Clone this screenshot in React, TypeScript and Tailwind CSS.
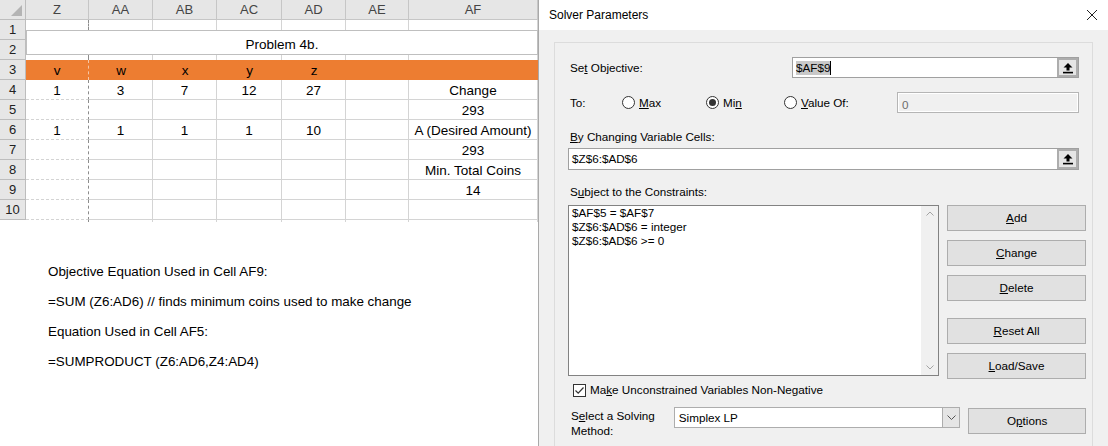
import type { ReactNode } from "react";

const cols = [
  { name: "Z", w: 63 },
  { name: "AA", w: 64 },
  { name: "AB", w: 64 },
  { name: "AC", w: 65 },
  { name: "AD", w: 64 },
  { name: "AE", w: 63 },
  { name: "AF", w: 129 },
];

const rows: { n: number; cells: string[] }[] = [
  { n: 4, cells: ["1", "3", "7", "12", "27", "", "Change"] },
  { n: 5, cells: ["", "", "", "", "", "", "293"] },
  { n: 6, cells: ["1", "1", "1", "1", "10", "", "A (Desired Amount)"] },
  { n: 7, cells: ["", "", "", "", "", "", "293"] },
  { n: 8, cells: ["", "", "", "", "", "", "Min. Total Coins"] },
  { n: 9, cells: ["", "", "", "", "", "", "14"] },
  { n: 10, cells: ["", "", "", "", "", "", ""] },
];

const sheetFont = { fontFamily: '"Liberation Sans", Arial, sans-serif' };
const dlgFont = { fontFamily: '"Liberation Sans", Arial, sans-serif' };

const lineFor = (i: number) =>
  i === 0 ? "border-r border-dashed border-r-[#8c8c8c]" : "border-r border-r-[#d4d4d4]";

function RowHead({ children, h = "h-[20px]" }: { children?: ReactNode; h?: string }) {
  return (
    <div
      className={`${h} w-[26px] shrink-0 flex items-center justify-center border-r border-b border-[#bdbdbd] bg-[#e6e6e6] text-[13px] text-[#222]`}
    >
      {children}
    </div>
  );
}

function Strip({ h, bottom }: { h: string; bottom?: boolean }) {
  return (
    <div className={`flex ${h}`}>
      {cols.map((c, i) => (
        <div
          key={c.name}
          className={`${lineFor(i)} ${bottom ? "border-b border-b-[#d4d4d4]" : ""}`}
          style={{ width: c.w }}
        />
      ))}
    </div>
  );
}

function Sheet() {
  return (
    <div className="w-[538px] shrink-0 bg-white text-black" style={sheetFont}>
      {/* column headers */}
      <div className="flex h-[20px]">
        <div className="relative w-[26px] border-r border-b border-[#bdbdbd] bg-[#e6e6e6]">
          <svg className="absolute right-[3px] bottom-[3px]" width="11" height="11" viewBox="0 0 11 11">
            <path d="M11 0 V11 H0 Z" fill="#b4b4b4" />
          </svg>
        </div>
        {cols.map((c) => (
          <div
            key={c.name}
            className="flex items-center justify-center border-r border-b border-[#c6c6c6] bg-[#e6e6e6] text-[13px] text-[#444]"
            style={{ width: c.w }}
          >
            {c.name}
          </div>
        ))}
      </div>

      {/* rows 1-2 with merged title */}
      <div className="flex">
        <div className="flex flex-col">
          <RowHead>1</RowHead>
          <RowHead>2</RowHead>
        </div>
        <div className="flex flex-col">
          <Strip h="h-[10px]" />
          <div className="flex h-[25px] items-center justify-center border border-[#bfbfbf] bg-white pt-[5px] text-[13.5px]">
            Problem 4b.
          </div>
          <Strip h="h-[5px]" />
        </div>
      </div>

      {/* row 3 orange */}
      <div className="flex h-[20px]">
        <RowHead>3</RowHead>
        {cols.map((c, i) => (
          <div
            key={c.name}
            className={`flex items-center justify-center bg-[#ed7d31] pt-[2px] text-[13.5px] ${
              i === 0 ? "border-r border-dashed border-r-[#f6c7a6]" : ""
            }`}
            style={{ width: c.w }}
          >
            {["v", "w", "x", "y", "z", "", ""][i]}
          </div>
        ))}
      </div>

      {rows.map((r) => (
        <div key={r.n} className="flex h-[20px]">
          <RowHead>{r.n}</RowHead>
          {cols.map((c, i) => (
            <div
              key={c.name}
              className={`flex items-center justify-center whitespace-nowrap border-b border-b-[#d4d4d4] pt-[3px] text-[13.5px] ${lineFor(i)}`}
              style={{ width: c.w }}
            >
              {r.cells[i]}
            </div>
          ))}
        </div>
      ))}
      <div className="flex h-[2px]">
        <div className="w-[26px]" />
        <Strip h="h-[2px]" />
      </div>

      <div className="pl-[48px] pt-[35px] text-[13.4px]">
        <p className="h-[30px] leading-[30px]">Objective Equation Used in Cell AF9:</p>
        <p className="h-[30px] leading-[30px]">=SUM (Z6:AD6) // finds minimum coins used to make change</p>
        <p className="h-[30px] leading-[30px]">Equation Used in Cell AF5:</p>
        <p className="h-[30px] leading-[30px]">=SUMPRODUCT (Z6:AD6,Z4:AD4)</p>
      </div>
    </div>
  );
}

function RefButton() {
  return (
    <div className="flex h-full w-[21px] shrink-0 items-center justify-center border-2 border-[#adadad] bg-[#e5e5e5]">
      <svg width="12" height="12" viewBox="0 0 12 12">
        <path d="M6 1 L1.5 5.5 H4.5 V8.5 H7.5 V5.5 H10.5 Z" fill="#000" />
        <rect x="1" y="9.8" width="10" height="1.6" fill="#000" />
      </svg>
    </div>
  );
}

function Radio({ on, children, w }: { on?: boolean; children: ReactNode; w: string }) {
  return (
    <div className={`flex items-center ${w}`}>
      <span className="flex h-[13px] w-[13px] items-center justify-center rounded-full border border-[#333] bg-white">
        {on ? <span className="h-[7px] w-[7px] rounded-full bg-[#333]" /> : null}
      </span>
      <span className="ml-[4px]">{children}</span>
    </div>
  );
}

function Btn({ children, className = "" }: { children: ReactNode; className?: string }) {
  return (
    <div
      className={`flex h-[26px] items-center justify-center border border-[#adadad] bg-[#e1e1e1] ${className}`}
    >
      {children}
    </div>
  );
}

function Dialog() {
  return (
    <div className="relative h-[446px] flex-1 overflow-hidden border-l border-[#a9a9a9] bg-[#f0f0f0] text-[11.7px] text-black" style={dlgFont}>
      <div className="flex h-[30px] items-center justify-between bg-white pl-[10px] pr-[10px]">
        <span className="text-[12px]">Solver Parameters</span>
        <svg width="12" height="12" viewBox="0 0 12 12">
          <path d="M1 1 L11 11 M11 1 L1 11" stroke="#222" strokeWidth="1" />
        </svg>
      </div>

      <div className="ml-[15px] mr-[15px] mt-[12px] h-[420px] border border-[#dcdcdc] pl-[15px] pr-[6px] pt-[14px]">
        {/* objective */}
        <div className="flex h-[21px] items-center">
          <span className="w-[222px]">
            Se<u>t</u> Objective:
          </span>
          <div className="flex h-[21px] w-[287px] border border-[#a0a0a0] bg-white">
            <div className="flex flex-1 items-center pl-[3px]">
              <span className="bg-[#c8c8c8] leading-[14px]">$AF$9</span>
              <span className="h-[14px] w-px bg-black" />
            </div>
            <RefButton />
          </div>
        </div>

        {/* To */}
        <div className="mt-[14px] flex h-[21px] items-center">
          <span className="w-[52px]">To:</span>
          <Radio w="w-[84px]">
            <u>M</u>ax
          </Radio>
          <Radio on w="w-[78px]">
            Mi<u>n</u>
          </Radio>
          <Radio w="w-[113px]">
            <u>V</u>alue Of:
          </Radio>
          <div className="h-[21px] w-[182px] border border-[#b5b5b5] bg-white p-px">
            <div className="flex h-full items-start bg-[#f0f0f0] pl-[3px] pt-[2px] text-[#6d6d6d]">0</div>
          </div>
        </div>

        {/* changing cells */}
        <div className="mt-[16px] h-[16px] leading-[16px]">
          <u>B</u>y Changing Variable Cells:
        </div>
        <div className="ml-[-2px] mt-[3px] flex h-[22px] w-[511px] border border-[#a0a0a0] bg-white">
          <div className="flex flex-1 items-center pl-[3px]">$Z$6:$AD$6</div>
          <RefButton />
        </div>

        {/* constraints */}
        <div className="mt-[14px] h-[16px] leading-[16px]">
          S<u>u</u>bject to the Constraints:
        </div>
        <div className="ml-[-2px] mt-[5px] flex">
          <div className="flex h-[171px] w-[371px] border border-[#828282] bg-white">
            <div className="flex-1 pl-[3px] pt-[0px] leading-[14px]">
              <div>$AF$5 = $AF$7</div>
              <div>$Z$6:$AD$6 = integer</div>
              <div>$Z$6:$AD$6 &gt;= 0</div>
            </div>
            <div className="flex w-[17px] flex-col items-center justify-between bg-[#f0f0f0] py-[5px]">
              <svg width="8" height="5" viewBox="0 0 8 5">
                <path d="M0.5 4.5 L4 1 L7.5 4.5" fill="none" stroke="#a3a3a3" />
              </svg>
              <svg width="8" height="5" viewBox="0 0 8 5">
                <path d="M0.5 0.5 L4 4 L7.5 0.5" fill="none" stroke="#a3a3a3" />
              </svg>
            </div>
          </div>
          <div className="ml-[8px] flex w-[139px] flex-col">
            <Btn>
              <u>A</u>dd
            </Btn>
            <Btn className="mt-[9px]">
              <u>C</u>hange
            </Btn>
            <Btn className="mt-[9px]">
              <u>D</u>elete
            </Btn>
            <Btn className="mt-[17px]">
              <u>R</u>eset All
            </Btn>
            <Btn className="mt-[9px]">
              <u>L</u>oad/Save
            </Btn>
          </div>
        </div>

        {/* checkbox */}
        <div className="mt-[3px] flex h-[16px] items-center pl-[3px]">
          <span className="flex h-[13px] w-[13px] items-center justify-center border border-[#333] bg-white">
            <svg width="11" height="11" viewBox="0 0 11 11">
              <path d="M1.5 5.5 L4.2 8.2 L9.5 2.5" fill="none" stroke="#333" strokeWidth="1.2" />
            </svg>
          </span>
          <span className="ml-[4px]">
            Ma<u>k</u>e Unconstrained Variables Non-Negative
          </span>
        </div>

        {/* method */}
        <div className="mt-[9px] flex items-start">
          <div className="w-[104px] pl-[1px] pt-[1px] leading-[15px]">
            S<u>e</u>lect a Solving
            <br />
            Method:
          </div>
          <div className="flex h-[21px] w-[287px] border border-[#adadad] bg-white">
            <div className="flex flex-1 items-center pl-[4px]">Simplex LP</div>
            <div className="flex w-[17px] items-center justify-center border-l border-[#adadad] bg-[#e5e5e5]">
              <svg width="9" height="5" viewBox="0 0 9 5">
                <path d="M0.5 0.5 L4.5 4.5 L8.5 0.5" fill="none" stroke="#555" />
              </svg>
            </div>
          </div>
          <Btn className="ml-[8px] mt-[1px] w-[118px]">
            O<u>p</u>tions
          </Btn>
        </div>
      </div>
    </div>
  );
}

export default function App() {
  return (
    <div className="flex h-[446px] w-[1108px] overflow-hidden bg-white">
      <Sheet />
      <Dialog />
    </div>
  );
}
